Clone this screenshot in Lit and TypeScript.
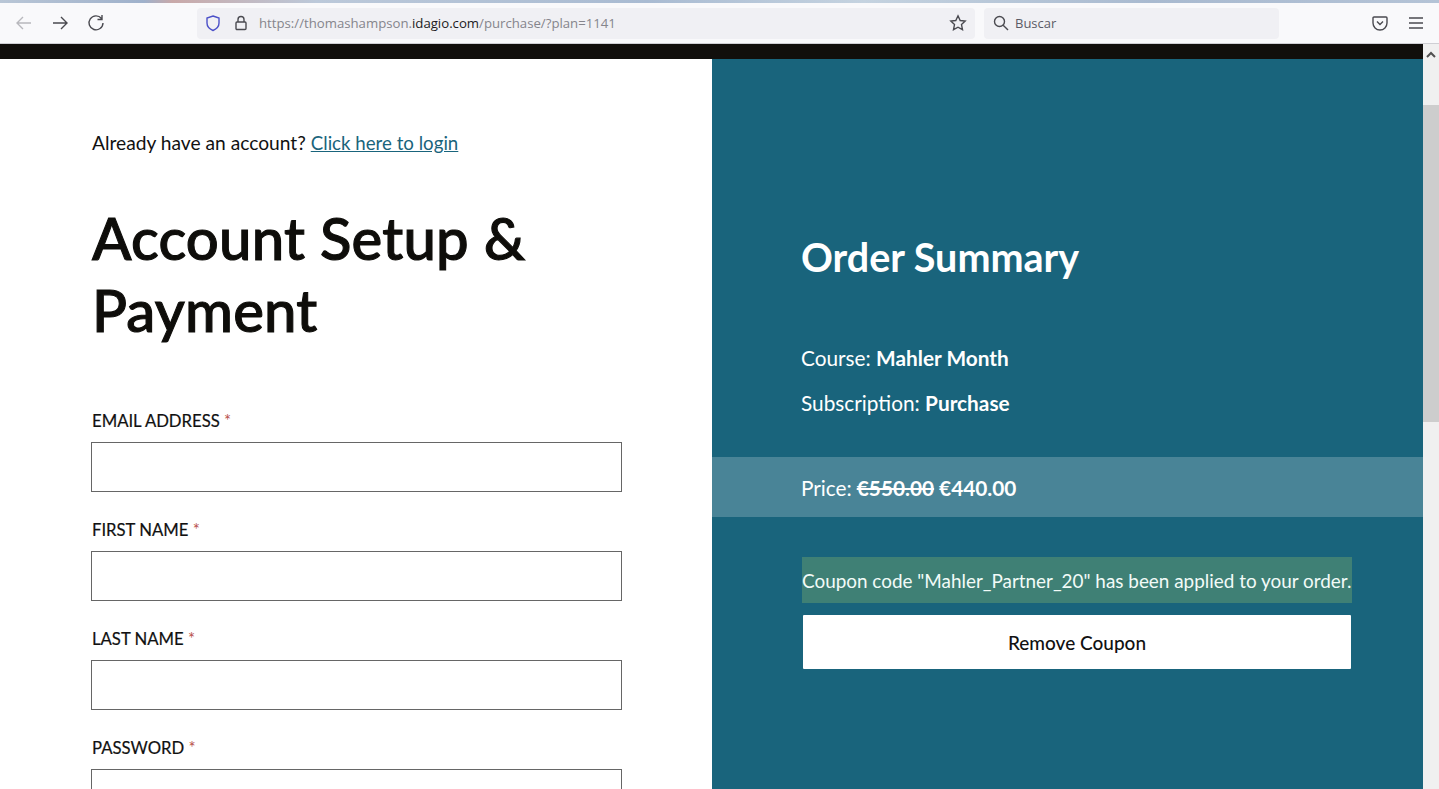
import { LitElement, html, css } from "lit";
import { customElement } from "lit/decorators.js";

@customElement("app-root")
export class AppRoot extends LitElement {
  static styles = css`
    :host { display: block; width: 1439px; height: 789px; overflow: hidden; background: #fff; font-family: "Lato", sans-serif; }
    svg { display: block; fill: none; stroke: #4a4a50; stroke-width: 1.4; }
    .strip { height: 3px; background: linear-gradient(90deg, #b9c6d6 0, #9fb1cb 10%, #c9a9a9 12%, #bcc9da 22%, #a9bbd2 45%, #c5d3e0 60%, #a9bad0 80%, #b4c3d6 100%); }
    .toolbar { height: 41px; box-sizing: border-box; background: #f9f9fb; display: flex; align-items: center; padding: 0 14px 0 14px; border-bottom: 1px solid #cfcfd4; }
    .nav { display: flex; gap: 16px; width: 183px; flex: none; }
    .nav svg { width: 20px; height: 20px; }
    .back { stroke: #b8b8bd; }
    .url { width: 778px; height: 31px; flex: none; background: #f0f0f4; border-radius: 4px; display: flex; align-items: center; font: 13.2px "Open Sans", sans-serif; color: #85858c; }
    .shield { width: 18px; height: 18px; margin-left: 7px; stroke: #4b50c8; }
    .lock { width: 16px; height: 16px; margin-left: 11px; margin-right: 10px; }
    .urltext b { font-weight: 400; color: #1c1b22; }
    .grow { flex: 1; }
    .star { width: 18px; height: 18px; margin-right: 8px; }
    .search { width: 295px; height: 31px; flex: none; margin-left: 9px; background: #f0f0f4; border-radius: 4px; display: flex; align-items: center; font: 13px "Open Sans", sans-serif; color: #5b5b66; gap: 6px; padding-left: 9px; box-sizing: border-box; }
    .search svg { width: 16px; height: 16px; }
    .tools { display: flex; margin-left: 92px; gap: 18px; }
    .tools svg { width: 18px; height: 18px; }
    .body { display: flex; height: 745px; }
    .page { width: 1423px; flex: none; overflow: hidden; }
    .black { height: 15px; background: #110f0c; }
    .cols { display: flex; height: 730px; }
    .left { width: 712px; flex: none; box-sizing: border-box; padding: 73px 0 0 92px; color: #111; }
    .login { font-size: 19.2px; line-height: 22px; margin: 0; }
    .login a { color: #19647c; font-size: 18.7px; }
    h1 { font: 500 58px/72px "Lato", sans-serif; margin: 48px 0 65px; color: #0e0d0a; letter-spacing: 0.2px; -webkit-text-stroke: 1.1px #0e0d0a; }
    .field { margin-bottom: 28px; }
    label { display: block; font-size: 16.7px; line-height: 20px; margin-bottom: 11px; color: #111; -webkit-text-stroke: 0.2px #111; }
    label span { color: #b8504c; -webkit-text-stroke: 0; }
    .box { width: 531px; height: 50px; margin-left: -1px; box-sizing: border-box; border: 1px solid #666; background: #fff; }
    .right { flex: 1; background: #19647c; color: #fff; box-sizing: border-box; padding-top: 172px; }
    h2 { font: 700 39.5px/52px "Lato", sans-serif; margin: 0 0 0 89px; }
    .line { font-size: 20.8px; line-height: 24px; margin: 0 0 0 89px; }
    .course { margin-top: 63px; }
    .sub { margin-top: 21px; }
    .price { margin-top: 42px; height: 60px; background: #498497; display: flex; align-items: center; padding-left: 89px; font-size: 20.8px; gap: 5px; }
    .price s { font-weight: 700; }
    .price b { font-weight: 700; }
    .coupon { margin: 40px 0 0 90px; width: 550px; height: 46px; background: #3f8075; display: flex; align-items: center; font-size: 18.9px; white-space: nowrap; color: #f2fbf8; }
    .remove { margin: 12px 0 0 91px; width: 548px; height: 54px; background: #fff; color: #111; display: flex; align-items: center; justify-content: center; font-size: 19px; font-weight: 500; border-radius: 1px; }
    .scroll { width: 16px; flex: none; background: #f0f0f0; }
    .up { width: 16px; height: 16px; margin-top: 3px; stroke: #505050; stroke-width: 2; }
    .thumb { height: 317px; margin-top: 42px; background: #cdcdcd; }
  `;

  field(name: string) {
    return html`<div class="field"><label>${name} <span>*</span></label><div class="box"></div></div>`;
  }

  render() {
    return html`
      <div class="strip"></div>
      <div class="toolbar">
        <div class="nav">
          <svg class="back" viewBox="0 0 20 20"><path d="M17 10H3M9 4l-6 6 6 6" /></svg>
          <svg viewBox="0 0 20 20"><path d="M3 10h14M11 4l6 6-6 6" /></svg>
          <svg viewBox="0 0 20 20"><path d="M15.500 5.500A7 7 0 1 0 17 10M16 2v4.500h-4.500" /></svg>
        </div>
        <div class="url">
          <svg class="shield" viewBox="0 0 18 18"><path d="M9 2l6 2v5c0 3.500-2.500 6-6 7.500C5.500 15 3 12.500 3 9V4z" /></svg>
          <svg class="lock" viewBox="0 0 16 16"><rect x="3" y="7" width="10" height="7.500" rx="1" /><path d="M5 7V4.500a3 3 0 0 1 6 0V7" /></svg>
          <span class="urltext">https://thomashampson.<b>idagio.com</b>/purchase/?plan=1141</span>
          <span class="grow"></span>
          <svg class="star" viewBox="0 0 18 18"><path d="M9 1.800l2.200 4.700 5 .6-3.700 3.500 1 5.100L9 13.200l-4.500 2.500 1-5.100L1.800 7.100l5-.6z" /></svg>
        </div>
        <div class="search">
          <svg viewBox="0 0 16 16"><circle cx="6.500" cy="6.500" r="5" /><path d="M10.200 10.200L15 15" /></svg>
          <span>Buscar</span>
        </div>
        <div class="tools">
          <svg viewBox="0 0 18 18"><path d="M3 3h12a1 1 0 0 1 1 1v5a7 7 0 0 1-14 0V4a1 1 0 0 1 1-1z" /><path d="M6 7.500l3 3 3-3" /></svg>
          <svg viewBox="0 0 18 18"><path d="M2 4h14M2 9h14M2 14h14" /></svg>
        </div>
      </div>
      <div class="body">
        <div class="page">
          <div class="black"></div>
          <div class="cols">
            <div class="left">
              <p class="login">Already have an account? <a href="#">Click here to login</a></p>
              <h1>Account Setup &amp;<br />Payment</h1>
              ${this.field("EMAIL ADDRESS")}
              ${this.field("FIRST NAME")}
              ${this.field("LAST NAME")}
              ${this.field("PASSWORD")}
            </div>
            <div class="right">
              <h2>Order Summary</h2>
              <p class="line course">Course: <b>Mahler Month</b></p>
              <p class="line sub">Subscription: <b>Purchase</b></p>
              <div class="price"><span>Price:</span> <s>€550.00</s> <b>€440.00</b></div>
              <div class="coupon">Coupon code "Mahler_Partner_20" has been applied to your order.</div>
              <div class="remove">Remove Coupon</div>
            </div>
          </div>
        </div>
        <div class="scroll">
          <svg class="up" viewBox="0 0 16 16"><path d="M4 10l4-4 4 4" /></svg>
          <div class="thumb"></div>
        </div>
      </div>
    `;
  }
}
